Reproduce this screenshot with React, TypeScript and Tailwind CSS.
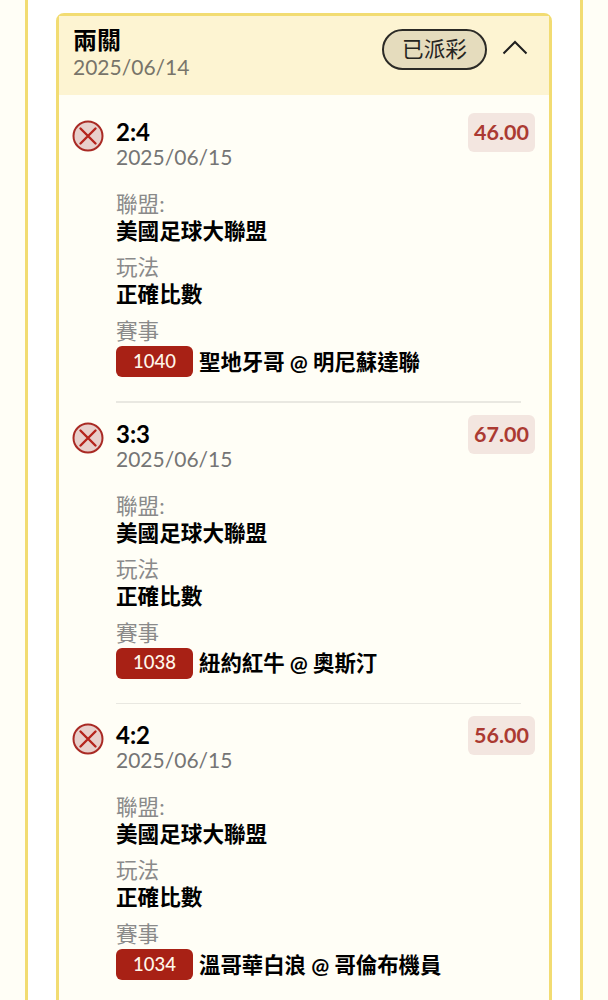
import React from 'react';

const legs = [
  { score: '2:4', odds: '46.00', code: '1040', match: '聖地牙哥 @ 明尼蘇達聯' },
  { score: '3:3', odds: '67.00', code: '1038', match: '紐約紅牛 @ 奧斯汀' },
  { score: '4:2', odds: '56.00', code: '1034', match: '溫哥華白浪 @ 哥倫布機員' },
];

const LostIcon = () => (
  <svg width="32" height="32" viewBox="0 0 32 32" className="shrink-0">
    <circle cx="16" cy="16" r="14.5" fill="#e8cfcb" stroke="#a92a24" strokeWidth="2" />
    <path d="M8.5 8.5L23.5 23.5M23.5 8.5L8.5 23.5" stroke="#b5241c" strokeWidth="2.4" strokeLinecap="round" />
  </svg>
);

const Leg = ({ score, odds, code, match, last }: { score: string; odds: string; code: string; match: string; last: boolean }) => (
  <div className="relative flex h-[301.5px] pl-[13px] pr-[13px]">
    <div className="mt-[11px]">
      <LostIcon />
    </div>
    <div className="ml-[12px] flex-1">
      <div className="flex items-start justify-between">
        <div>
          <p className="text-[24px] leading-[26px] font-bold text-black mt-[10px]">{score}</p>
          <p className="text-[21px] leading-[24px] text-[#757575]">2025/06/15</p>
        </div>
        <span className="mt-[4px] mr-[1px] rounded-md bg-[#f3e6e0] px-[6px] h-[39px] flex items-center text-[21.5px] font-bold text-[#ab3a32]">{odds}</span>
      </div>
      <div className="mt-[21px] text-[21.6px]">
        <p className="text-[#8a8a8a] leading-[28px]">聯盟:</p>
        <p className="font-bold text-black leading-[28px] -mt-[1px]">美國足球大聯盟</p>
        <p className="text-[#8a8a8a] mt-[8px] leading-[28px]">玩法</p>
        <p className="font-bold text-black leading-[28px] -mt-[1px]">正確比數</p>
        <p className="text-[#8a8a8a] mt-[9px] leading-[28px]">賽事</p>
        <div className="flex items-center gap-[6px] mt-[1px]">
          <span className="flex h-[31px] w-[77px] items-center justify-center rounded-md bg-[#a82115] text-[18.5px] font-medium text-[#fff7ea]">{code}</span>
          <span className="font-bold text-black text-[21.4px] leading-[30px]">{match}</span>
        </div>
      </div>
      {!last && <div className="mr-[15px] mt-[24px] h-[1.5px] bg-[#e9e8e1]" />}
    </div>
  </div>
);

export default function App() {
  return (
    <div
      className="h-[1000px] w-[608px] overflow-hidden bg-[#fffef6] px-[25px]"
      style={{ fontFamily: 'Lato, "Noto Sans CJK TC", sans-serif' }}
    >
      <div className="h-full border-x-[3px] border-[#f2dc72] bg-white px-[28px] pt-[13px]">
        <div className="h-[1100px] rounded-t-lg border-[3px] border-[#f2dc72] bg-[#fffef6]">
          <div className="flex h-[79px] items-start justify-between bg-[#fdf4d2] pl-[14px] pr-[21px]">
            <div className="pt-[10px]">
              <p className="text-[24px] leading-[28px] font-bold text-black">兩關</p>
              <p className="text-[21px] leading-[25px] text-[#78746a]">2025/06/14</p>
            </div>
            <div className="flex items-center gap-[15px] pt-[13px]">
              <span className="ml-[1px] flex h-[41px] w-[105px] items-center justify-center rounded-full border-2 border-[#2b2a26] bg-[#e5dcbd] text-[21.6px] text-[#26251f]">已派彩</span>
              <svg width="26" height="15" viewBox="0 0 26 15" fill="none" className="-mt-[4px]">
                <path d="M1.5 13.5L13 2L24.5 13.5" stroke="#1f1f1f" strokeWidth="2" />
              </svg>
            </div>
          </div>
          <div className="pt-[14px]">
            {legs.map((leg, i) => (
              <Leg key={leg.code} {...leg} last={i === legs.length - 1} />
            ))}
          </div>
        </div>
      </div>
    </div>
  );
}
